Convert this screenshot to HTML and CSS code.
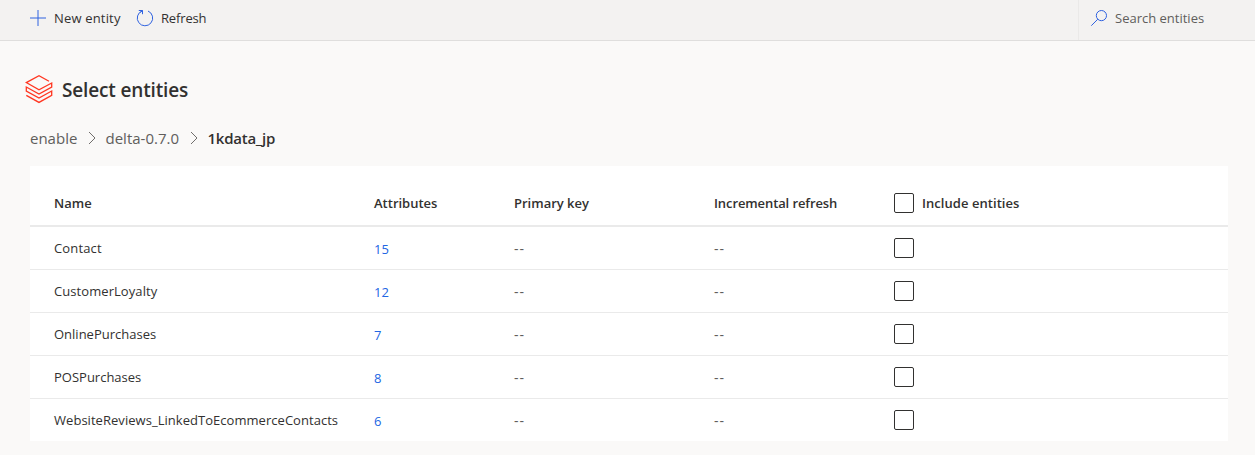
FILE: index.html
```html
<!DOCTYPE html>
<html lang="en">
<head>
<meta charset="utf-8">
<title>Select entities</title>
<link rel="stylesheet" href="styles.css">
</head>
<body>
<header class="toolbar">
  <div class="command command-new">
    <svg class="icon" width="16" height="16" viewBox="0 0 16 16"><path d="M0 8h16M8 0v16"/></svg>
    <span class="label label-new">New entity</span>
  </div>
  <div class="command command-refresh">
    <svg class="icon" width="16" height="16" viewBox="0 0 16 16"><path d="M11 1A7.7 7.7 0 1 1 5.2 .9M1.8 .5H5.5V4.2M5.5 .5L3.2 2.4"/></svg>
    <span class="label label-refresh">Refresh</span>
  </div>
  <div class="search">
    <svg class="icon" width="16" height="16" viewBox="0 0 16 16"><circle cx="10.4" cy="5.6" r="5.1"/><path d="M6.8 9.2L.3 15.7"/></svg>
    <span class="label label-search">Search entities</span>
  </div>
</header>
<main class="page">
  <div class="title-row">
    <svg class="logo" width="28" height="30" viewBox="0 0 28 30"><path d="M24 6.2L14 .8L1.3 7.6L14 14.8L26.7 8V12L14 19L1.3 12V16L14 23L26.7 16V20.3L14 27.4L1.3 20.4"/></svg>
    <h1 class="title">Select entities</h1>
  </div>
  <nav class="breadcrumb">
    <span class="crumb crumb-enable">enable</span>
    <svg class="chevron" width="8" height="14" viewBox="0 0 8 14"><path d="M1 1l6 6-6 6"/></svg>
    <span class="crumb crumb-delta">delta-0.7.0</span>
    <svg class="chevron" width="8" height="14" viewBox="0 0 8 14"><path d="M1 1l6 6-6 6"/></svg>
    <span class="crumb crumb-current">1kdata_jp</span>
  </nav>
  <section class="table">
    <div class="row head">
      <span class="head-name">Name</span><span class="head-attributes">Attributes</span><span class="head-key">Primary key</span><span class="head-refresh">Incremental refresh</span>
      <span class="include"><i class="checkbox"></i><span class="head-include">Include entities</span></span>
    </div>
    <div class="row"><span class="name name-contact">Contact</span><a class="count">15</a><span class="empty">--</span><span class="empty">--</span><span class="include"><i class="checkbox"></i></span></div>
    <div class="row"><span class="name name-loyalty">CustomerLoyalty</span><a class="count">12</a><span class="empty">--</span><span class="empty">--</span><span class="include"><i class="checkbox"></i></span></div>
    <div class="row"><span class="name name-online">OnlinePurchases</span><a class="count">7</a><span class="empty">--</span><span class="empty">--</span><span class="include"><i class="checkbox"></i></span></div>
    <div class="row"><span class="name name-pos">POSPurchases</span><a class="count">8</a><span class="empty">--</span><span class="empty">--</span><span class="include"><i class="checkbox"></i></span></div>
    <div class="row"><span class="name name-reviews">WebsiteReviews_LinkedToEcommerceContacts</span><a class="count">6</a><span class="empty">--</span><span class="empty">--</span><span class="include"><i class="checkbox"></i></span></div>
  </section>
</main>
</body>
</html>
```
FILE: styles.css
```css
* { box-sizing: border-box; }
body {
  margin: 0;
  height: 455px;
  overflow: hidden;
  background: #faf9f8;
  color: #323130;
  font: 13px/20px "Open Sans", "Noto Sans", sans-serif;
  white-space: nowrap;
}
.toolbar {
  display: flex;
  height: 41px;
  background: #f3f2f1;
  border-bottom: 1px solid #dfdedd;
}
.command { display: flex; gap: 8px; height: 36px; align-items: center; }
.command-new { width: 107px; padding-left: 30px; }
.command-refresh { margin-left: 30px; }
.label-new { letter-spacing: .17px; }
.label-refresh { letter-spacing: -.15px; }
.search {
  display: flex;
  gap: 8px;
  width: 177px;
  height: 40px;
  margin-left: auto;
  padding: 0 0 4px 12px;
  align-items: center;
  border-left: 1px solid #eae9e8;
  color: #605e5c;
}
.icon { flex: none; fill: none; stroke: #2f62e0; stroke-width: 1; overflow: visible; }
.page { padding: 34px 27px 0 25px; }
.title-row { display: flex; gap: 9px; height: 30px; align-items: center; }
.logo { flex: none; fill: none; stroke: #ff3621; stroke-width: 1.3; }
.title { margin: 0; font-size: 19px; line-height: 28px; font-weight: 600; letter-spacing: -.15px; }
.breadcrumb {
  display: flex;
  height: 24px;
  margin: 21px 0 0 5px;
  align-items: center;
  font-size: 15px;
  line-height: 24px;
  color: #605e5c;
}
.crumb-enable { width: 58px; }
.crumb-delta { width: 77px; margin-left: 9.5px; }
.crumb-delta + .chevron { margin-left: 7.5px; }
.crumb-current { margin-left: 9.5px; color: #323130; font-weight: 600; letter-spacing: -.25px; }
.chevron { flex: none; fill: none; stroke: #706e6c; stroke-width: 1; }
.table { width: 1198px; margin: 16px 0 0 5px; background: #fff; }
.row {
  display: grid;
  grid-template-columns: 320px 140px 200px 180px 1fr;
  height: 43px;
  padding-left: 24px;
  align-items: center;
  border-bottom: 1px solid #eaeaea;
}
.row:last-child { height: 42px; border-bottom: 0; }
.head { height: 61px; padding-top: 15px; border-bottom-width: 2px; font-weight: 600; }
.head-refresh { letter-spacing: -.1px; }
.head-include { letter-spacing: .05px; }
.name-contact { letter-spacing: .15px; }
.name-loyalty { letter-spacing: .07px; }
.name-reviews { letter-spacing: .04px; }
.count { position: relative; top: 1px; color: #2266e3; }
.empty { position: relative; top: 1px; color: #605e5c; font-size: 14px; letter-spacing: 1px; }
.include { display: flex; gap: 8px; align-items: center; }
.checkbox { width: 20px; height: 20px; border: 1px solid #323130; border-radius: 2px; }
```
